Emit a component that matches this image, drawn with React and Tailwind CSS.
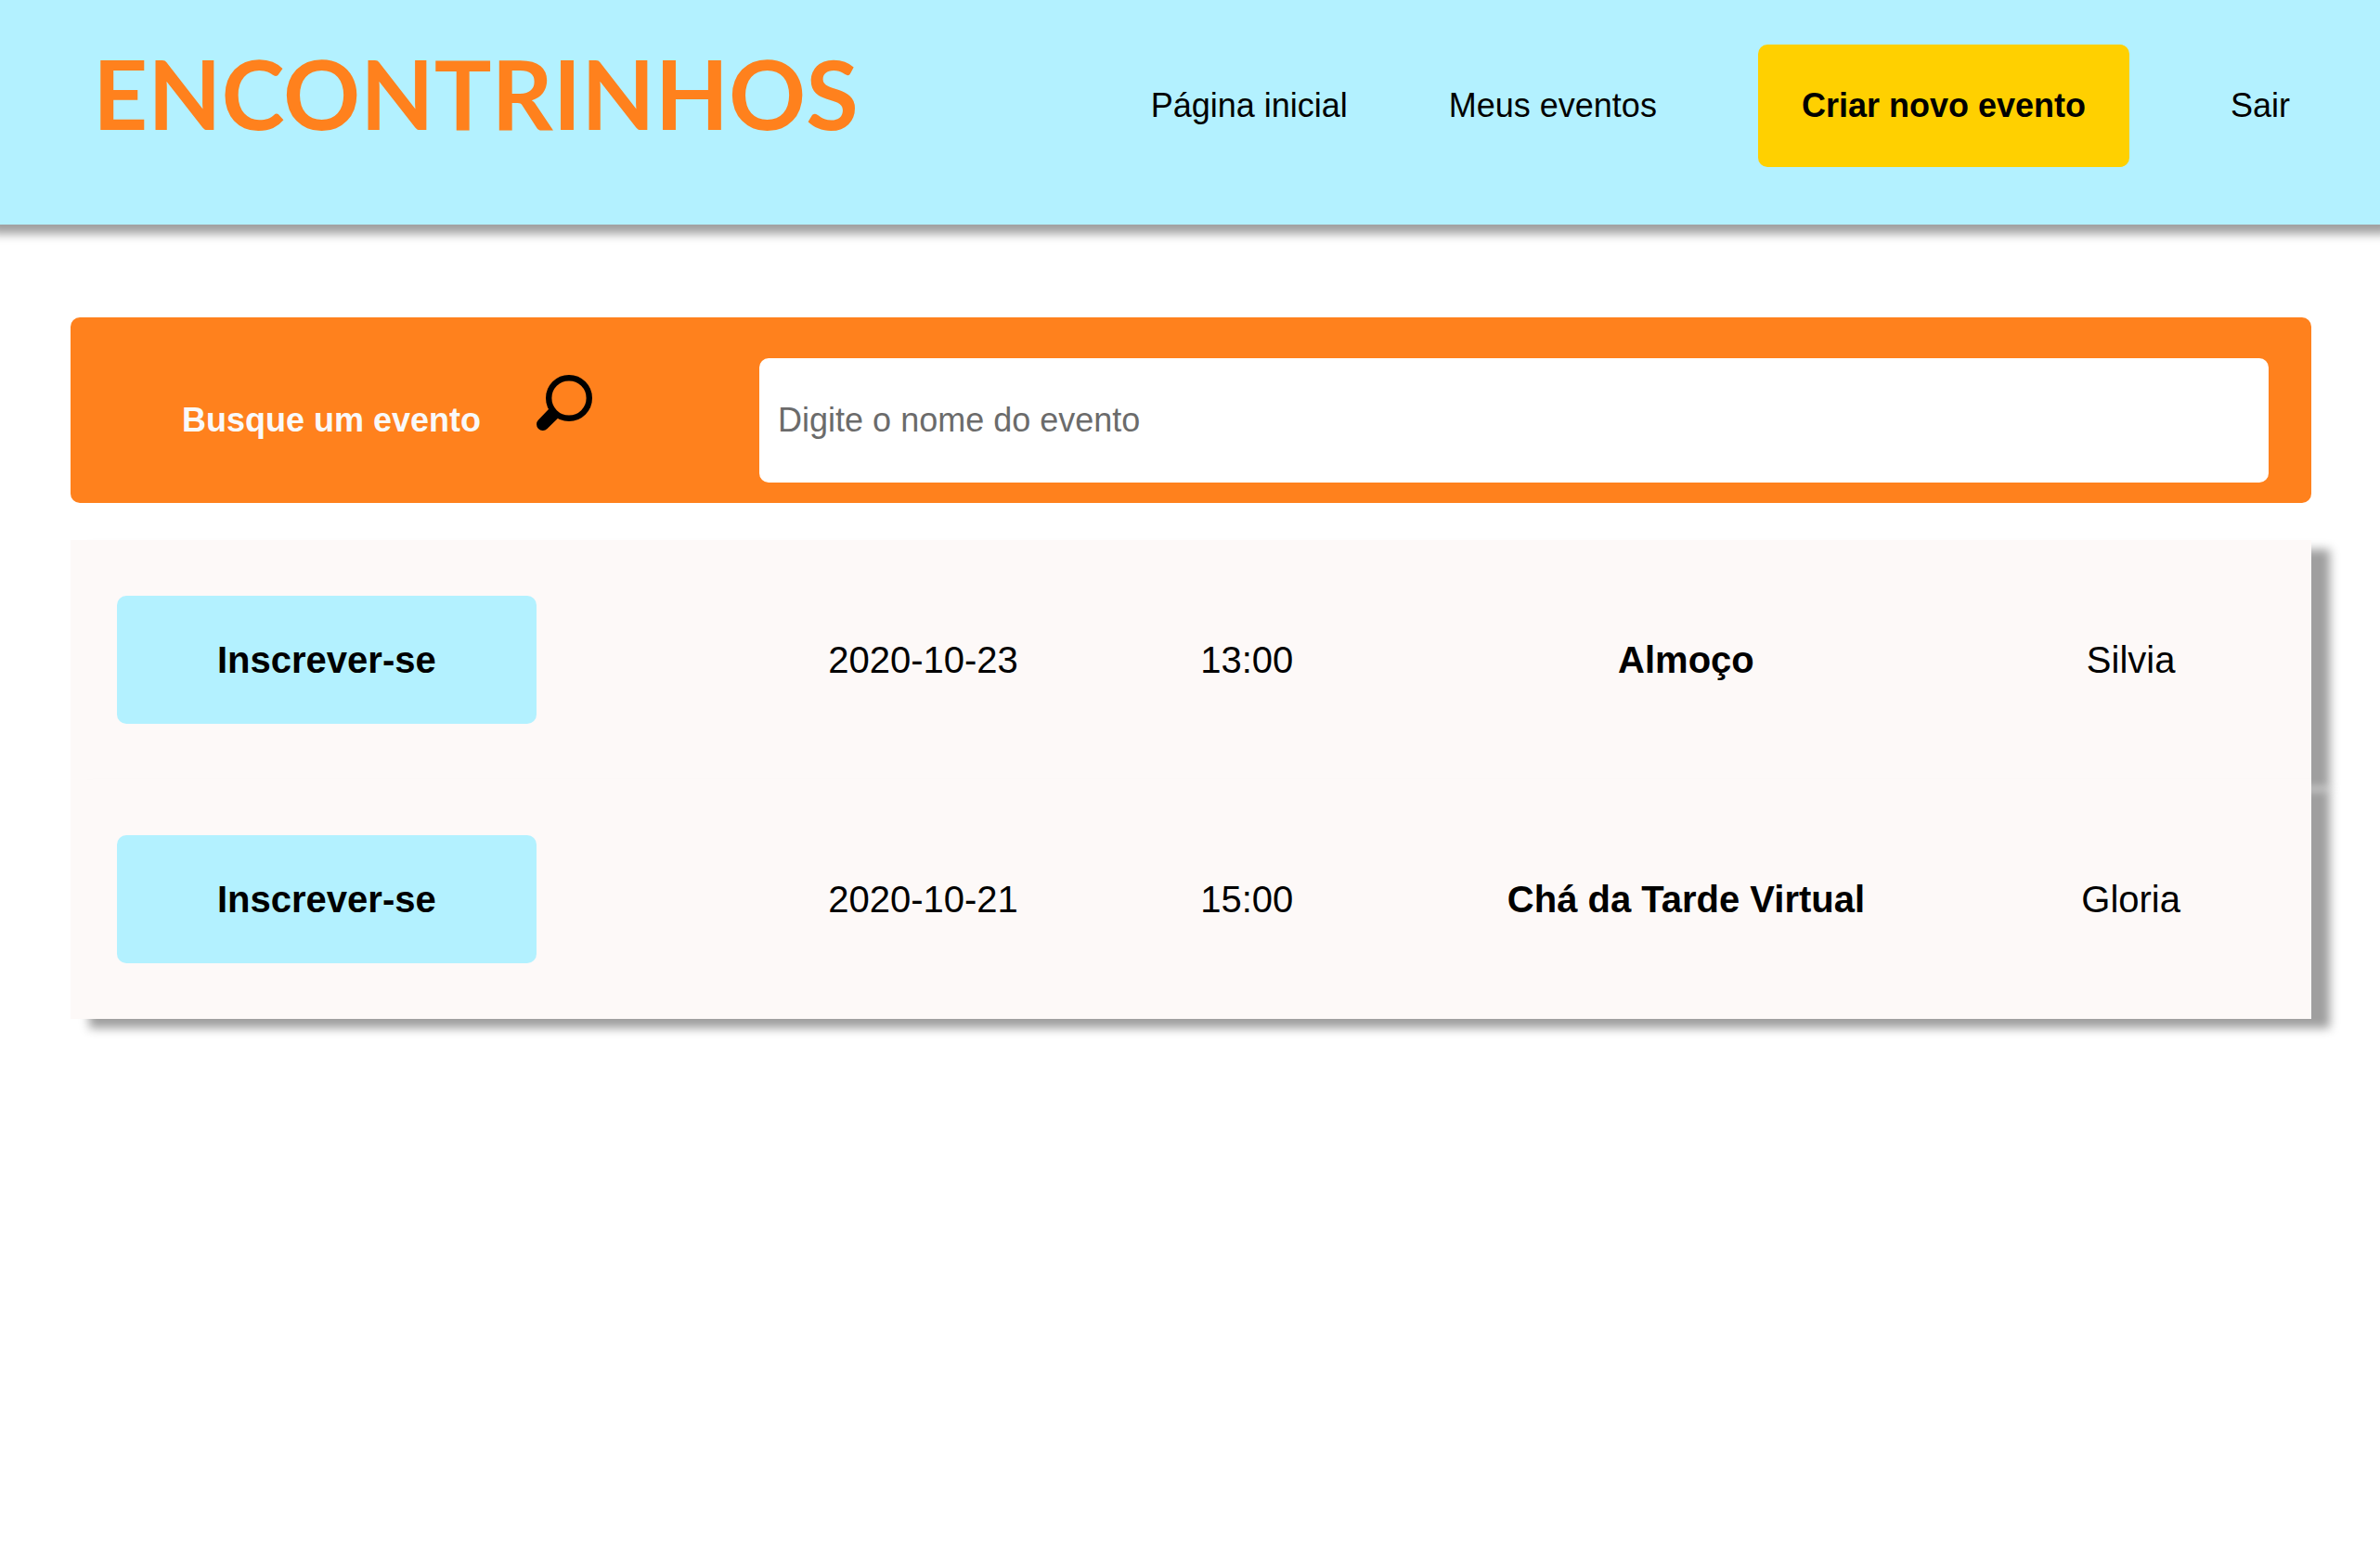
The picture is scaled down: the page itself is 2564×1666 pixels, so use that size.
const events = [
  { date: "2020-10-23", time: "13:00", name: "Almoço", host: "Silvia" },
  { date: "2020-10-21", time: "15:00", name: "Chá da Tarde Virtual", host: "Gloria" },
];

function SearchIcon() {
  return (
    <svg viewBox="0 0 60 60" className="mb-[38px] size-[60px] shrink-0" aria-hidden="true">
      <circle cx="35" cy="25" r="21.8" fill="none" stroke="#000" strokeWidth="6.4" />
      <path d="M13.7 36.3 L2 48.5 A6.7 6.7 0 0 0 11.5 58 L23 46.7 L24 43 L17 35 Z" fill="#000" />
    </svg>
  );
}

function Header() {
  return (
    <header className="flex items-start justify-between bg-[#b3f1ff] pt-12 pr-[97px] pb-[62px] pl-[100px] shadow-[0_0_10px_10px_#9f9f9f]">
      <h1 className="font-['Lato',sans-serif] text-[103px] leading-[104px] font-bold text-[#ff811d]">ENCONTRINHOS</h1>
      <nav className="flex items-center gap-[109px] text-[36px] leading-[44px] whitespace-nowrap">
        <a href="#inicio">Página inicial</a>
        <a href="#eventos">Meus eventos</a>
        <a href="#novo" className="rounded-[10px] bg-[#ffd000] px-[47px] py-11 font-bold">
          Criar novo evento
        </a>
        <a href="#sair">Sair</a>
      </nav>
    </header>
  );
}

function SearchBar() {
  return (
    <form className="flex items-center rounded-[10px] bg-[#ff811d] pt-11 pr-[46px] pb-[22px] pl-[120px]">
      <label htmlFor="busca" className="mr-[180px] flex items-center gap-[60px] text-[36px] leading-[44px] font-bold whitespace-nowrap text-[#f9f9f9]">
        Busque um evento
        <SearchIcon />
      </label>
      <input
        id="busca"
        type="text"
        placeholder="Digite o nome do evento"
        className="h-[134px] min-w-0 flex-1 rounded-[10px] bg-white px-5 text-[36px] leading-[44px] placeholder:text-[#6b6b6b]"
      />
    </form>
  );
}

function EventTable() {
  return (
    <table className="w-full table-fixed border-separate border-spacing-0 text-center text-[40px] leading-[46px]">
      <colgroup>
        <col className="w-[31.4%]" />
        <col className="w-[13.3%]" />
        <col className="w-[15.6%]" />
        <col className="w-[23.6%]" />
        <col />
      </colgroup>
      <tbody>
        {events.map((e) => (
          <tr key={e.date} className="bg-[#fdf9f8] shadow-[20px_10px_10px_#9f9f9f]">
            <td className="py-[60px] pl-[50px] text-left">
              <button type="button" className="block rounded-[10px] bg-[#b3f1ff] px-[108px] py-[46px] font-bold">
                Inscrever-se
              </button>
            </td>
            <td>{e.date}</td>
            <td>{e.time}</td>
            <td className="font-bold">{e.name}</td>
            <td>{e.host}</td>
          </tr>
        ))}
      </tbody>
    </table>
  );
}

export default function App() {
  return (
    <div className="min-h-screen overflow-x-hidden bg-white font-['Liberation_Sans',Arial,sans-serif] text-black">
      <Header />
      <main className="flex flex-col gap-10 pt-[100px] pr-[74px] pl-[76px]">
        <SearchBar />
        <EventTable />
      </main>
    </div>
  );
}
